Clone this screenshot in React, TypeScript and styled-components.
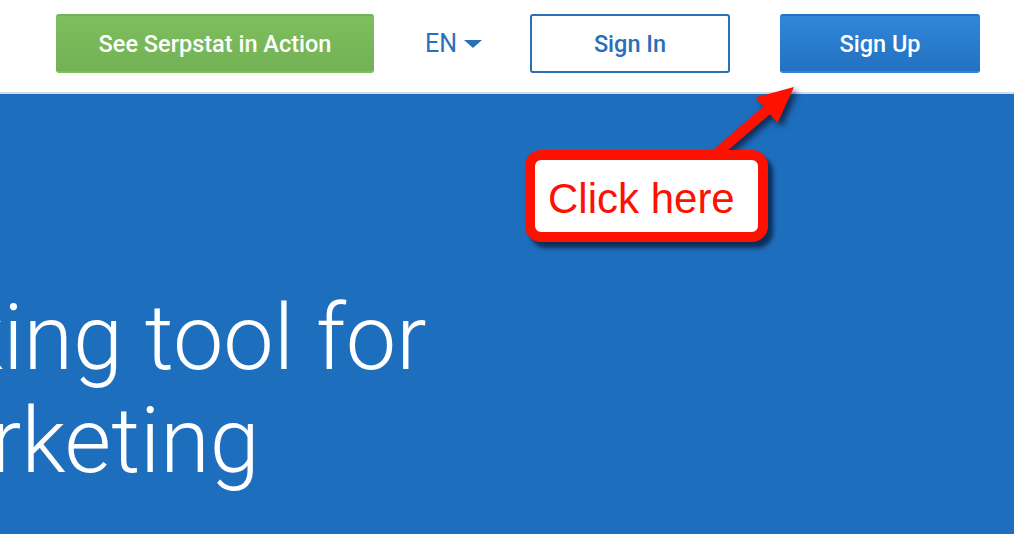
import React from 'react';
import styled, { createGlobalStyle } from 'styled-components';

const GlobalStyle = createGlobalStyle`
    html, body {
        margin: 0;
        padding: 0;
        background: #ffffff;
    }
`;

const Page = styled.div`
    position: relative;
    width: 1014px;
    height: 534px;
    overflow: hidden;
    display: flex;
    flex-direction: column;
    font-family: Roboto, 'Liberation Sans', sans-serif;
`;

const Header = styled.header`
    height: 94px;
    flex-shrink: 0;
    box-sizing: border-box;
    padding: 14px 0 0 56px;
    display: flex;
    align-items: flex-start;
    background: #ffffff;
    border-bottom: 2px solid #d7dce9;
`;

const Button = styled.button<{ $variant: 'green' | 'outline' | 'blue'; $width: number }>`
    box-sizing: border-box;
    width: ${p => p.$width}px;
    height: 59px;
    padding: 0;
    border-radius: 3px;
    font-family: Roboto, 'Liberation Sans', sans-serif;
    font-size: 23.5px;
    font-weight: 500;
    cursor: pointer;
    border: 2px solid transparent;
    color: #ffffff;
    ${p => p.$variant === 'green' && `
        background: linear-gradient(#7dbe5f, #73b254);
    `}
    ${p => p.$variant === 'outline' && `
        background: #ffffff;
        border-color: #2a6fba;
        color: #2a6fba;
    `}
    ${p => p.$variant === 'blue' && `
        background: linear-gradient(#3087d9, #2370c1);
    `}
`;

const Lang = styled.div`
    width: 56px;
    height: 59px;
    margin: 0 49px 0 51px;
    display: flex;
    align-items: center;
    gap: 7px;
    color: #2a6fba;
    font-size: 25px;
    font-weight: 400;
`;

const Caret = styled.span`
    width: 0;
    height: 0;
    border-left: 9px solid transparent;
    border-right: 9px solid transparent;
    border-top: 8px solid #2a6fba;
    margin-top: 1px;
`;

const Spacer = styled.div`
    width: 50px;
`;

const Hero = styled.section`
    flex: 1;
    background: #1e6ebe;
    padding-top: 193px;
    overflow: hidden;
`;

const Line = styled.div<{ $shift: number }>`
    margin-left: ${p => -p.$shift}px;
    white-space: nowrap;
    color: #ffffff;
    font-family: Roboto, 'Liberation Sans', sans-serif;
    font-weight: 300;
    font-size: 90px;
    line-height: 103px;
`;

const Arrow = styled.svg`
    position: absolute;
    left: 700px;
    top: 78px;
    width: 110px;
    height: 90px;
    overflow: visible;
    filter: drop-shadow(4px 4px 3px rgba(10, 32, 64, 0.85));
`;

const Callout = styled.div`
    position: absolute;
    left: 525px;
    top: 150px;
    width: 243px;
    height: 92px;
    box-sizing: border-box;
    border: 10px solid #fe1100;
    border-radius: 16px;
    background: #ffffff;
    box-shadow: 5px 6px 4px rgba(10, 35, 70, 0.85);
    display: flex;
    align-items: center;
    padding: 5px 0 0 13px;
    color: #fe1100;
    font-family: 'Liberation Sans', Arial, sans-serif;
    font-size: 42px;
`;

const App = () => {
    return (
        <>
            <GlobalStyle />
            <Page>
                <Header>
                    <Button $variant='green' $width={318}>See Serpstat in Action</Button>
                    <Lang>
                        EN
                        <Caret />
                    </Lang>
                    <Button $variant='outline' $width={200}>Sign In</Button>
                    <Spacer />
                    <Button $variant='blue' $width={200}>Sign Up</Button>
                </Header>
                <Hero>
                    <Line $shift={185}>hacking tool for</Line>
                    <Line $shift={137}>marketing</Line>
                </Hero>
                <Arrow viewBox='0 0 110 90'>
                    <polygon
                        fill='#fe1100'
                        points='94,9 77.6,45.3 69.85,36.2 19.25,79.8 12.75,72.2 63.35,28.6 55.5,19.5'
                    />
                </Arrow>
                <Callout>Click here</Callout>
            </Page>
        </>
    );
};

export default App;
